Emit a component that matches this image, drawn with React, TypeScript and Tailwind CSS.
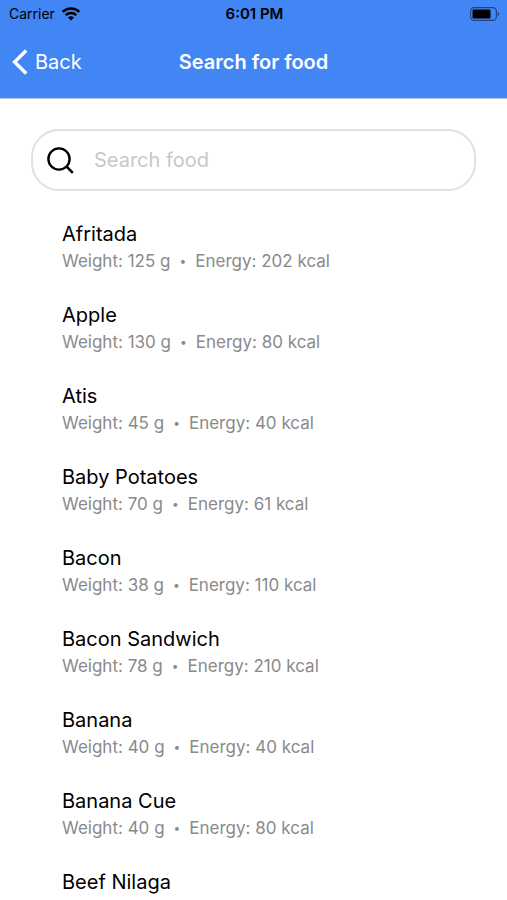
import { useState } from "react";

type Food = {
  name: string;
  weight?: number;
  energy?: number;
};

const foods: Food[] = [
  { name: "Afritada", weight: 125, energy: 202 },
  { name: "Apple", weight: 130, energy: 80 },
  { name: "Atis", weight: 45, energy: 40 },
  { name: "Baby Potatoes", weight: 70, energy: 61 },
  { name: "Bacon", weight: 38, energy: 110 },
  { name: "Bacon Sandwich", weight: 78, energy: 210 },
  { name: "Banana", weight: 40, energy: 40 },
  { name: "Banana Cue", weight: 40, energy: 80 },
  { name: "Beef Nilaga" },
];

function WifiIcon() {
  return (
    <svg width="20" height="14" viewBox="0 0 20 14" fill="none" stroke="black" aria-hidden="true">
      <path d="M1.6 4.9a12 12 0 0 1 16.8 0" strokeWidth="2.5" />
      <path d="M4.7 8.1a7.6 7.6 0 0 1 10.6 0" strokeWidth="2.4" />
      <path d="M10 13.6 7 10.6a4.3 4.3 0 0 1 6 0z" fill="black" stroke="none" />
    </svg>
  );
}

function BatteryIcon() {
  return (
    <svg width="30" height="14" viewBox="0 0 30 14" aria-hidden="true">
      <rect x="0.6" y="0.6" width="25.8" height="12.8" rx="3.6" fill="none" stroke="black" strokeOpacity="0.5" strokeWidth="1.1" />
      <rect x="2.5" y="2.5" width="18" height="9" rx="1.2" fill="black" />
      <path d="M27.6 4.7v4.6a2.5 2.5 0 0 0 0-4.6z" fill="black" fillOpacity="0.5" />
    </svg>
  );
}

function StatusBar() {
  return (
    <div className="grid grid-cols-3 items-center h-7 pl-[9px] pr-[7px] text-sm text-black">
      <div className="flex items-center gap-[6px]">
        <span>Carrier</span>
        <WifiIcon />
      </div>
      <span className="text-center text-[15px] font-semibold">6:01 PM</span>
      <div className="flex justify-end">
        <BatteryIcon />
      </div>
    </div>
  );
}

function Header() {
  return (
    <header className="pb-[2px] bg-[#4285f4] border-b border-[#b4c6e8]">
      <StatusBar />
      <div className="grid grid-cols-[1fr_auto_1fr] items-center h-[68px] px-3 text-xl text-white">
        <button type="button" className="flex items-center gap-[7px] justify-self-start">
          <svg width="16" height="26" viewBox="0 0 16 26" fill="none" stroke="white" strokeWidth="3.4" aria-hidden="true">
            <path d="M14.2 1.5 2.6 13l11.6 11.5" />
          </svg>
          Back
        </button>
        <h1 className="font-semibold">Search for food</h1>
      </div>
    </header>
  );
}

export default function App() {
  const [query, setQuery] = useState("");

  const results = foods.filter((food) =>
    food.name.toLowerCase().includes(query.trim().toLowerCase())
  );

  return (
    <div className="min-h-screen bg-white font-['Inter',sans-serif]">
      <Header />
      <main className="px-[31px] pt-[30px]">
        {/* Search field */}
        <label className="flex items-center gap-5 h-[62px] px-[14px] border-2 border-[#e0e0e0] rounded-[28px]">
          <svg width="27" height="27" viewBox="0 0 27 27" fill="none" stroke="black" strokeWidth="2.4" className="shrink-0" aria-hidden="true">
            <circle cx="12" cy="12" r="10.6" />
            <path d="M19.4 19.4 25.8 25.8" strokeWidth="2.6" />
          </svg>
          <input
            type="text"
            aria-label="Search food"
            value={query}
            onChange={(e) => setQuery(e.target.value)}
            placeholder="Search food"
            className="flex-1 min-w-0 text-xl text-black placeholder:text-[#c7c7cd] focus:outline-none"
          />
        </label>

        {/* Food list */}
        <ul className="flex flex-col gap-[27px] pt-[29px] px-[31px]">
          {results.map((food) => (
            <li key={food.name}>
              <h2 className="text-xl leading-7 text-black">{food.name}</h2>
              {food.weight !== undefined && (
                <p className="flex gap-[9px] text-[17px] leading-[26px] text-[#8a8a8a]">
                  <span>Weight: {food.weight} g</span>
                  <span className="text-xs leading-[26px]">•</span>
                  <span>Energy: {food.energy} kcal</span>
                </p>
              )}
            </li>
          ))}
        </ul>
      </main>
    </div>
  );
}
